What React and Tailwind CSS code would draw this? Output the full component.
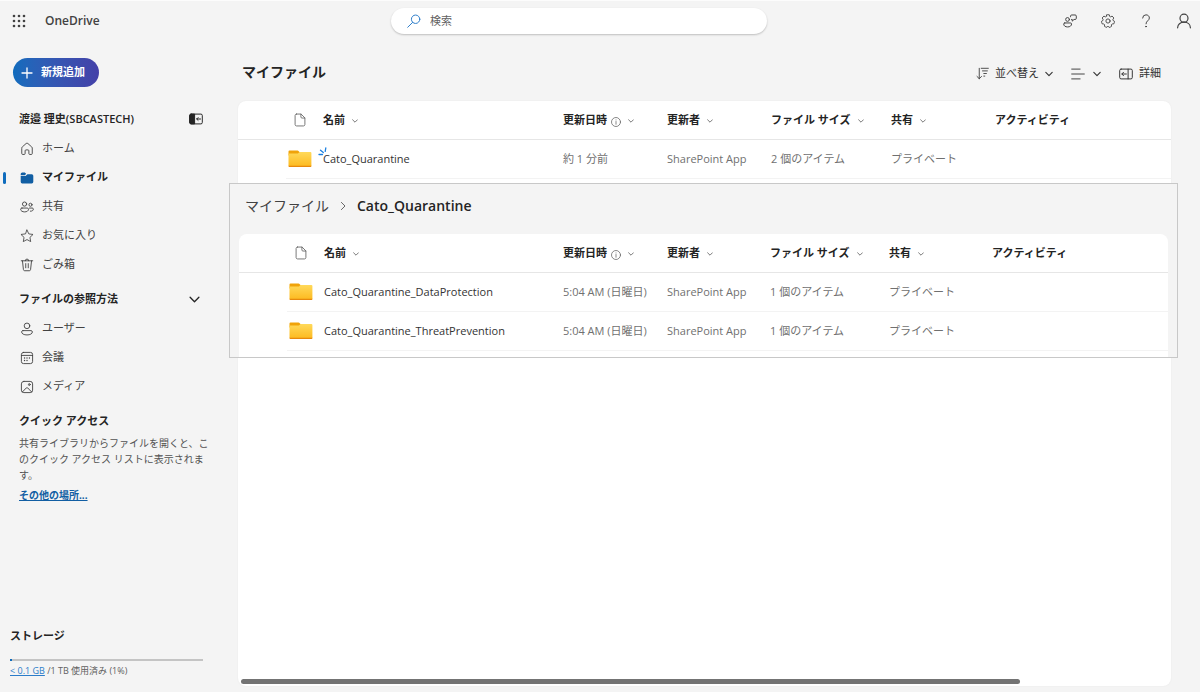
import React from "react";

const FONT = "font-['Open_Sans','Noto_Sans_CJK_JP',sans-serif]";

function Icon({ size = 14, sw = 1.2, vb = 20, className = "", children }) {
  return (
    <svg
      width={size}
      height={size}
      viewBox={`0 0 ${vb} ${vb}`}
      fill="none"
      stroke="currentColor"
      strokeWidth={sw}
      strokeLinecap="round"
      strokeLinejoin="round"
      aria-hidden="true"
      className={`shrink-0 ${className}`}
    >
      {children}
    </svg>
  );
}

const HomeIcon = () => (
  <Icon sw={1.3}>
    <path d="M2.5 8.6c0-.6.3-1.1.7-1.5l5.600-5c.7-.6 1.700-.6 2.400 0l5.600 5c.4.4.7.9.7 1.500v8c0 .7-.5 1.200-1.200 1.200h-2.400c-.7 0-1.200-.5-1.200-1.200v-4.100c0-.7-.5-1.200-1.200-1.200H8.500c-.7 0-1.200.5-1.200 1.200v4.100c0 .7-.5 1.200-1.200 1.200H3.700c-.7 0-1.200-.5-1.200-1.200z" />
  </Icon>
);

const FilesIcon = () => (
  <Icon size={14} className="text-[#115ea3]">
    <path d="M1 6V4.200A2.200 2.200 0 0 1 3.200 2h3.600l2 2-1.800 2z" fill="currentColor" stroke="none" />
    <path d="M1 7.300h6.300c.4 0 .7-.1 1-.4l2.300-2.300h6.200A2.200 2.200 0 0 1 19 6.800v8.700a2.200 2.200 0 0 1-2.200 2.200H3.200A2.200 2.200 0 0 1 1 15.500z" fill="currentColor" stroke="none" />
  </Icon>
);

const PeopleIcon = () => (
  <Icon sw={1.3}>
    <circle cx="6.5" cy="5.8" r="3" />
    <path d="M2.800 11.500h7.600c1 0 1.800.7 1.800 1.700 0 2.300-2.500 3.800-5.600 3.800S.9 15.500.9 13.200c0-1 .9-1.700 1.900-1.700z" />
    <circle cx="15" cy="6.8" r="2.200" />
    <path d="M13.500 11.500h4c.9 0 1.600.6 1.600 1.500 0 2-1.900 3.200-4.300 3" />
  </Icon>
);

const StarIcon = () => (
  <Icon sw={1.2}>
    <path d="M10 1.500l2.600 5.500 6 .8-4.400 4.200 1.100 6-5.300-2.900L4.700 18l1.100-6L1.400 7.800l6-.8z" />
  </Icon>
);

const TrashIcon = () => (
  <Icon sw={1.3}>
    <path d="M1.800 4h16.400M7.500 4a2.500 2.500 0 0 1 5 0M3.500 4l1.400 12.600c.1.900.8 1.600 1.700 1.600h6.800c.9 0 1.600-.7 1.700-1.600L16.500 4M8.200 8v6M11.800 8v6" />
  </Icon>
);

const PersonIcon = () => (
  <Icon sw={1.3}>
    <circle cx="10" cy="5.5" r="4" />
    <path d="M4.200 12.300h11.600c1.100 0 1.900.8 1.900 1.900 0 2.600-3.400 4.300-7.700 4.300s-7.700-1.700-7.700-4.300c0-1.100.8-1.900 1.900-1.900z" />
  </Icon>
);

const CalendarIcon = () => (
  <Icon sw={1.3}>
    <rect x="2" y="2" width="16" height="16" rx="3" />
    <path d="M2 6.300h16" />
    <g fill="currentColor" stroke="none">
      <circle cx="6.5" cy="13.5" r="1" />
      <circle cx="10" cy="10" r="1" />
      <circle cx="10" cy="13.5" r="1" />
      <circle cx="13.5" cy="10" r="1" />
      <circle cx="6.5" cy="10" r="1" />
    </g>
  </Icon>
);

const MediaIcon = () => (
  <Icon sw={1.3}>
    <rect x="2" y="2" width="16" height="16" rx="3.5" />
    <circle cx="13.3" cy="6.5" r="1.3" />
    <path d="M3.500 17l5.500-5.700c.6-.6 1.400-.6 2 0l5.500 5.700" />
  </Icon>
);

const ChevronDown = ({ size = 8, sw = 1.4, className = "" }) => (
  <Icon size={size} sw={sw} vb={10} className={className}>
    <path d="M1 3l4 4 4-4" />
  </Icon>
);

const FileIcon = () => (
  <Icon size={14} sw={1.2} className="text-[#616161]">
    <path d="M5 1.500h6.500L17 7v9.500c0 1.100-.9 2-2 2H5c-1.100 0-2-.9-2-2v-13c0-1.100.9-2 2-2z" />
    <path d="M11.300 1.700v4.100c0 .8.6 1.400 1.400 1.400h4.100" />
  </Icon>
);

const InfoIcon = () => (
  <Icon size={10} sw={1.5} className="mt-1 text-[#616161]">
    <circle cx="10" cy="10" r="9" />
    <path d="M10 9v5.500M10 5.800v.2" />
  </Icon>
);

const FolderIcon = () => (
  <svg width="24" height="18" viewBox="0 0 24 18" aria-hidden="true" className="shrink-0">
    <defs>
      <linearGradient id="folder" x1="0" y1="0" x2="0" y2="1">
        <stop offset="0" stopColor="#ffd95a" />
        <stop offset="1" stopColor="#fdbb22" />
      </linearGradient>
    </defs>
    <path d="M.5 1.500a1 1 0 0 1 1-1h8a1 1 0 0 1 .7.300L12 2.500v3H.5z" fill="#f0a30a" />
    <path d="M.5 3.600h8.800c.5 0 .8-.1 1.200-.5l.8-.8c.2-.2.5-.3.8-.3h10.300a1 1 0 0 1 1 1v13H.5z" fill="url(#folder)" />
    <path d="M.5 15.700h22.900v.5a.8.8 0 0 1-.8.8H1.300a.8.8 0 0 1-.8-.8z" fill="#e8890c" />
  </svg>
);

const NewMark = () => (
  <svg
    width="9"
    height="9"
    viewBox="0 0 9 9"
    fill="none"
    stroke="#1a7fe0"
    strokeWidth="1.3"
    strokeLinecap="round"
    aria-hidden="true"
    className="absolute -top-1 -left-[5px]"
  >
    <path d="M1 7.500h3.500M2.500 3.200l2.800 2.300M7.800 1l-.6 3.300" />
  </svg>
);

const PanelIcon = ({ filled }) => (
  <Icon size={14} sw={1.4}>
    <rect x="1" y="3" width="18" height="14" rx="2" />
    {filled ? (
      <>
        <path d="M1 5a2 2 0 0 1 2-2h5v14H3a2 2 0 0 1-2-2z" fill="currentColor" />
        <path d="M16.500 10H11M13 8l-2 2 2 2" />
      </>
    ) : (
      <path d="M13 3v14M10.500 10H4.200M6.500 7.500L4 10l2.500 2.500" />
    )}
  </Icon>
);

function NavItem({ icon, label, active }) {
  return (
    <li className="flex items-center">
      <span className={`h-3 w-[3px] rounded-full ${active ? "bg-[#0f6cbd]" : ""}`} />
      <a
        href="#"
        aria-current={active ? "page" : undefined}
        className={`flex h-[29px] items-center gap-2 pl-[14px] text-[11px] ${
          active ? "font-semibold text-[#242424]" : "text-[#424242]"
        }`}
      >
        {icon}
        {label}
      </a>
    </li>
  );
}

const COLUMNS = [
  { label: "名前", sort: true },
  { label: "更新日時", sort: true, info: true },
  { label: "更新者", sort: true },
  { label: "ファイル サイズ", sort: true },
  { label: "共有", sort: true },
  { label: "アクティビティ" },
];

const WIDE_COLUMNS = ["w-[48px]", "w-[37px]", "w-[240px]", "w-[104px]", "w-[104px]", "w-[120px]", "w-[104px]", ""];
const INNER_COLUMNS = ["w-[48px]", "w-[37px]", "w-[239px]", "w-[104px]", "w-[103px]", "w-[119px]", "w-[103px]", ""];

function FileTable({ label, rows, widths }) {
  return (
    <table aria-label={label} className="w-full table-fixed border-separate border-spacing-0 text-left">
      <colgroup>
        {widths.map((w, i) => (
          <col key={i} className={w} />
        ))}
      </colgroup>
      <thead>
        <tr className="h-[39px]">
          <td className="border-b border-[#e6e6e6]" />
          <td className="border-b border-[#e6e6e6] pl-[7px]">
            <FileIcon />
          </td>
          {COLUMNS.map((c) => (
            <th key={c.label} scope="col" className="border-b border-[#e6e6e6] p-0 font-normal">
              {c.sort ? (
                <button
                  type="button"
                  className="flex items-center text-[11px] leading-4 font-bold whitespace-nowrap text-[#242424]"
                >
                  {c.label}
                  {c.info && (
                    <span className="ml-1">
                      <InfoIcon />
                    </span>
                  )}
                  <ChevronDown size={6} className="mt-0.5 ml-[7px] text-[#616161]" />
                </button>
              ) : (
                <span className="block text-[11px] leading-4 font-bold text-[#242424]">{c.label}</span>
              )}
            </th>
          ))}
        </tr>
      </thead>
      <tbody>
        {rows.map((r) => (
          <tr key={r.name} className="h-[39px] text-[11px] whitespace-nowrap text-[#707070]">
            <td />
            <td className="border-b border-[#f3f3f3] pl-[2px]">
              <FolderIcon />
            </td>
            <td className="border-b border-[#f3f3f3]">
              <a href="#" className="relative text-[#333333]">
                {r.isNew && <NewMark />}
                {r.name}
              </a>
            </td>
            <td className="border-b border-[#f3f3f3]">{r.modified}</td>
            <td className="border-b border-[#f3f3f3]">{r.by}</td>
            <td className="border-b border-[#f3f3f3]">{r.size}</td>
            <td className="border-b border-[#f3f3f3]">{r.sharing}</td>
            <td className="border-b border-[#f3f3f3]" />
          </tr>
        ))}
      </tbody>
    </table>
  );
}

const ROOT_ROWS = [
  { name: "Cato_Quarantine", isNew: true, modified: "約 1 分前", by: "SharePoint App", size: "2 個のアイテム", sharing: "プライベート" },
];
const INNER_ROWS = [
  { name: "Cato_Quarantine_DataProtection", modified: "5:04 AM (日曜日)", by: "SharePoint App", size: "1 個のアイテム", sharing: "プライベート" },
  { name: "Cato_Quarantine_ThreatPrevention", modified: "5:04 AM (日曜日)", by: "SharePoint App", size: "1 個のアイテム", sharing: "プライベート" },
];

function TopBar() {
  return (
    <header className="grid h-10 grid-cols-[391px_minmax(0,376px)_1fr] items-center border-t border-[#fcfcfc] text-[#424242]">
      <div className="flex items-center">
        <button type="button" aria-label="アプリ起動ツール" className="ml-3">
          <svg width="14" height="14" viewBox="0 0 14 14" fill="currentColor" aria-hidden="true">
            {[2, 7, 12].map((y) => [2, 7, 12].map((x) => <circle key={`${x}-${y}`} cx={x} cy={y} r="1.3" />))}
          </svg>
        </button>
        <a href="#" className="ml-[19px] text-xs font-semibold">OneDrive</a>
      </div>
      <div className="flex h-[26px] items-center rounded-full bg-white pl-4 shadow-[0_1px_2px_rgba(0,0,0,0.22)]">
        <label htmlFor="search" className="text-[#2b7cc9]">
          <Icon size={14} sw={1.4}>
            <circle cx="12.3" cy="7.5" r="6" />
            <path d="M8 12l-7 7" />
          </Icon>
        </label>
        <input
          id="search"
          type="search"
          aria-label="検索"
          placeholder="検索"
          className="mr-4 ml-[9px] h-5 w-full min-w-0 bg-transparent text-[11px] leading-4 outline-none placeholder:text-[#616161]"
        />
      </div>
      <nav className="flex justify-end gap-1.5">
        <button type="button" aria-label="フィードバック" className="flex h-8 w-8 items-center justify-center">
          <Icon size={14} sw={1.4}>
            <circle cx="6.5" cy="7.8" r="2.7" />
            <path d="M2.500 12.800h8.200c.9 0 1.500.6 1.500 1.500 0 2.500-2.300 4.200-5.600 4.200S1 16.800 1 14.300c0-.9.6-1.500 1.500-1.500z" />
            <path d="M10.800 4V3c0-1 .6-1.600 1.600-1.600h5c1 0 1.600.6 1.600 1.600v3.200c0 1-.6 1.600-1.600 1.600h-1.600l-2.600 2.400V7.800h-1" />
          </Icon>
        </button>
        <button type="button" aria-label="設定" className="flex h-8 w-8 items-center justify-center">
          <Icon size={14} sw={1.3}>
            <path d="M8.100 1.200a9 9 0 0 1 3.800 0l.4 2.200 1.500.7 2-1.100a9 9 0 0 1 2.500 2.800l-1.300 1.900.3 1.600 2 1.200a9 9 0 0 1-1 3.600l-2.300.1-1.100 1.200.1 2.300a9 9 0 0 1-3.400 1.500L10 17.300l-1.600 1.700A9 9 0 0 1 5 17.700l.1-2.300-1.100-1.200-2.300-.1a9 9 0 0 1-1-3.600l2-1.200.3-1.600-1.300-1.900A9 9 0 0 1 4.200 3l2 1.100 1.500-.7z" />
            <circle cx="10" cy="10" r="3" />
          </Icon>
        </button>
        <button type="button" aria-label="ヘルプ" className="flex h-8 w-8 items-center justify-center">
          <Icon size={14} sw={1.4}>
            <path d="M5.200 5.800A4.800 4.800 0 0 1 10 1.200c2.700 0 4.800 1.900 4.800 4.500 0 3.800-4.800 4-4.800 8.300" />
            <circle cx="10" cy="18" r=".6" fill="currentColor" />
          </Icon>
        </button>
        <button type="button" aria-label="アカウント" className="flex h-8 w-8 items-center justify-center">
          <Icon size={16} sw={1.5}>
            <circle cx="10" cy="6.5" r="5" />
            <path d="M2 18.500c0-4.200 3.500-7 8-7s8 2.800 8 7" />
          </Icon>
        </button>
      </nav>
    </header>
  );
}

function Sidebar() {
  return (
    <aside className="flex w-[238px] shrink-0 flex-col pr-[35px]">
      <button
        type="button"
        className="mt-[18px] ml-[13px] flex h-[29px] w-[86px] items-center gap-2 rounded-full bg-linear-to-r from-[#0f6cbd] to-[#4340a8] pl-2 text-[11px] font-bold text-white"
      >
        <Icon size={12} sw={1.3} vb={12}>
          <path d="M6 1v10M1 6h10" />
        </Icon>
        新規追加
      </button>

      <div className="mt-5 flex h-6 items-center justify-between pl-[19px]">
        <h2 className="text-[11px] font-semibold text-[#242424]">渡邉 理史(SBCASTECH)</h2>
        <button type="button" aria-label="ナビゲーションを閉じる" className="text-[#242424]">
          <PanelIcon filled />
        </button>
      </div>

      <nav className="mt-[3px]">
        <ul className="pl-[3px]">
          <NavItem icon={<HomeIcon />} label="ホーム" />
          <NavItem icon={<FilesIcon />} label="マイファイル" active />
          <NavItem icon={<PeopleIcon />} label="共有" />
          <NavItem icon={<StarIcon />} label="お気に入り" />
          <NavItem icon={<TrashIcon />} label="ごみ箱" />
        </ul>

        <button
          type="button"
          aria-expanded="true"
          className="mt-1.5 flex h-[29px] w-full items-center justify-between pr-[3px] pl-[19px] text-[11px] font-bold text-[#242424]"
        >
          ファイルの参照方法
          <ChevronDown size={11} sw={1.2} />
        </button>
        <ul className="pl-[3px]">
          <NavItem icon={<PersonIcon />} label="ユーザー" />
          <NavItem icon={<CalendarIcon />} label="会議" />
          <NavItem icon={<MediaIcon />} label="メディア" />
        </ul>
      </nav>

      <section className="mt-3 pl-[19px]">
        <h2 className="text-[11px] leading-4 font-bold text-[#242424]">クイック アクセス</h2>
        <p className="mt-[6px] -mr-2 text-[10px] leading-4 text-[#525252]">
          共有ライブラリからファイルを開くと、このクイック アクセス リストに表示されます。
        </p>
        <a href="#" className="mt-1 block text-[10px] leading-4 font-bold text-[#115ea3] underline">その他の場所...</a>
      </section>

      <section className="mt-auto pb-[13px] pl-[10px]">
        <h2 className="text-[11px] leading-4 font-bold text-[#242424]">ストレージ</h2>
        <div className="mt-[15px] h-[2px] w-full bg-[#c4c4c4]">
          <div className="h-full w-[1%] bg-[#0f6cbd]" />
        </div>
        <p className="mt-[2px] text-[9px] leading-4 text-[#616161]">
          <a href="#" className="text-[#2b7cc9] underline">&lt; 0.1 GB</a> /1 TB 使用済み (1%)
        </p>
      </section>
    </aside>
  );
}

export default function App() {
  return (
    <div className={`flex min-h-screen flex-col bg-[#f4f4f4] ${FONT}`}>
      <TopBar />
      <div className="flex flex-1">
        <Sidebar />
        <main className="mr-[29px] mb-[6px] flex min-w-0 flex-1 flex-col">
          <div className="flex h-[61px] items-center justify-between pt-0.5 pr-[10px] pl-1">
            <h1 className="text-sm font-bold text-[#242424]">マイファイル</h1>
            <div className="flex items-center pt-1 text-[11px] text-[#333333]">
              <button type="button" className="flex items-center gap-1.5">
                <Icon size={13} sw={1.3}>
                  <path d="M5 2v16M1.500 14.500L5 18l3.500-3.500M8 2h11M10 6h7.500M12 10h4M12 14h1.500" />
                </Icon>
                並べ替え
                <ChevronDown size={8} />
              </button>
              <button type="button" aria-label="表示オプション" className="ml-[18px] flex items-center gap-2">
                <Icon size={14} sw={1.3}>
                  <path d="M1 3h12M1 10h18M1 17h12" />
                </Icon>
                <ChevronDown size={8} />
              </button>
              <button type="button" className="ml-[18px] flex items-center gap-1.5">
                <PanelIcon />
                詳細
              </button>
            </div>
          </div>

          <section className="relative flex flex-1 flex-col rounded-lg bg-white shadow-[0_0_2px_rgba(0,0,0,0.06)]">
            <FileTable label="マイファイル" rows={ROOT_ROWS} widths={WIDE_COLUMNS} />
            <div className="mt-auto px-[3px] pb-[2px]">
              <div className="h-[5px] w-[84%] rounded-full bg-[#737373]" />
            </div>

            <section className="absolute top-[82px] -right-[7px] -left-[9px] border border-[#c8c8c8] bg-[#f4f4f4]">
              <nav className="flex h-[50px] items-center pb-1.5 pl-[15px] text-sm text-[#242424]">
                <a href="#" className="text-[#424242]">マイファイル</a>
                <Icon size={8} sw={1.2} vb={10} className="mx-[10px] text-[#616161]">
                  <path d="M3 .5L7.500 5 3 9.500" />
                </Icon>
                <span aria-current="page" className="font-semibold">Cato_Quarantine</span>
              </nav>
              <div className="mx-[9px] rounded-t-lg bg-white pb-[6px]">
                <FileTable label="Cato_Quarantine" rows={INNER_ROWS} widths={INNER_COLUMNS} />
              </div>
            </section>
          </section>
        </main>
      </div>
    </div>
  );
}
